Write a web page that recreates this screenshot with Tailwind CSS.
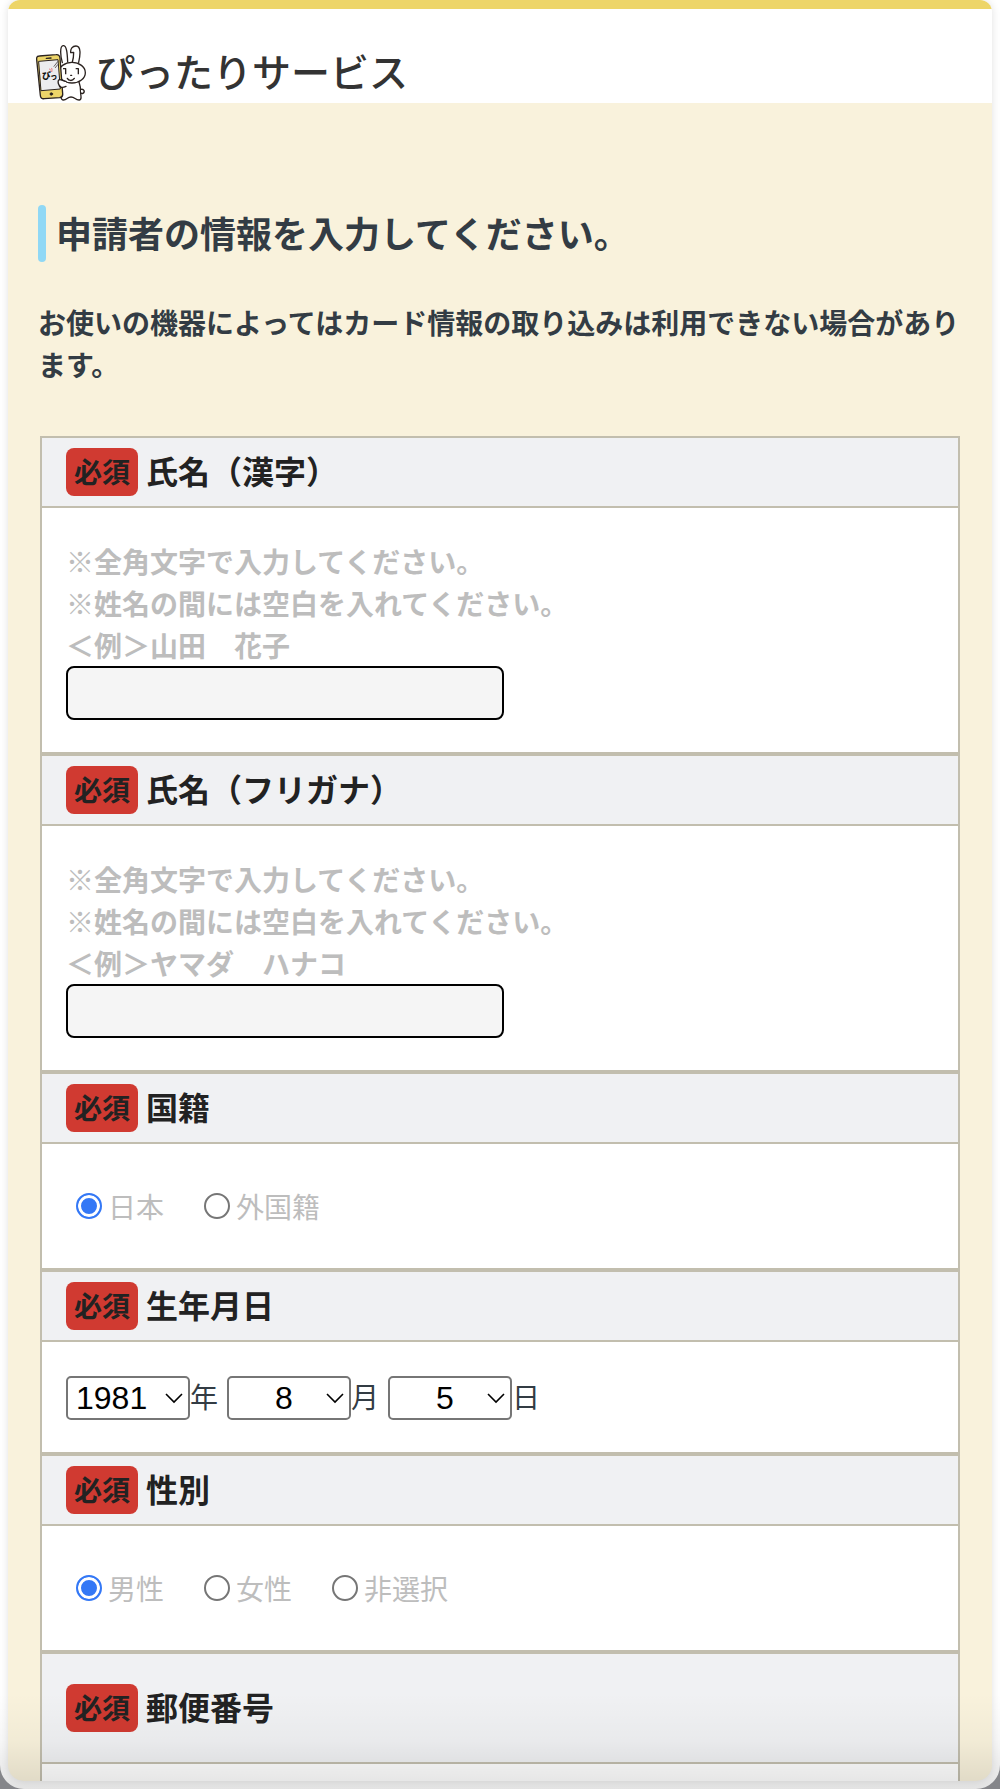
<!DOCTYPE html>
<html lang="ja">
<head>
<meta charset="utf-8">
<meta name="viewport" content="width=device-width, initial-scale=1">
<title>ぴったりサービス</title>
<script src="https://cdn.jsdelivr.net/npm/@tailwindcss/browser@4"></script>
</head>
<body class="bg-[#85868a] font-['Noto_Sans_CJK_JP',sans-serif] text-[#333c44]">
<div class="relative min-h-screen overflow-hidden rounded-b-[24px] bg-white px-2 pb-2">
  <div class="overflow-hidden rounded-t-[12px] rounded-b-[16px] bg-[#f9f2dc] shadow-[0_0_8px_rgba(0,0,0,0.12)]">

    <header class="border-t-[9px] border-[#edd569] bg-white">
      <a href="#" class="flex h-[94px] items-end gap-[10px] px-7 pb-[2px]">
        <svg class="h-14 w-[50px] shrink-0" viewBox="0 0 150 168" fill="none" stroke="#2b2320" stroke-width="4" stroke-linecap="round" stroke-linejoin="round" aria-hidden="true">
          <path d="M79 53C73 34 71 4 81 2c12-2 13 28 14 49M109 51c3-9 4-17 4-29l-9 1c-1-12 5-20 16-20 16 0 13 28 8 49" fill="#fff"/>
          <path d="M84 108c-3 12-8 24-8 38 0 8-4 17 5 19 12 1 12-9 24-9s13 10 25 9c9-2 4-12 4-21 0-12-1-23-5-33" fill="#fff"/>
          <path d="M135 133c9-2 13 8 6 12-3 1-5 0-6-1" fill="#fff"/>
          <ellipse cx="108" cy="83" rx="40" ry="31" fill="#fff"/>
          <path d="M10 33l50-4c8-1 11 3 12 10l8 107c1 8-2 11-9 12l-46 3c-8 1-12-3-12-10L2 44c-1-7 2-11 8-11z" fill="#edd569"/>
          <path d="M9 49l57-5 7 88-57 5z" fill="#ececee" stroke-width="3"/>
          <path d="M31 40l14-1"/>
          <circle cx="46" cy="147" r="4" fill="#2b2320" stroke-width="2"/>
          <path d="M54 64l11-14M58 68l7-9" stroke-width="2"/>
          <path d="M40 72l6 5M47 70l1 4M44 80l5-2" stroke="#e04a4a" stroke-width="2"/>
          <text x="18" y="102" font-size="26" font-weight="900" fill="#111" stroke="none">ぴ</text>
          <text x="43" y="101" font-size="21" font-weight="900" fill="#111" stroke="none">っ</text>
          <path d="M81 71h8v17M119 71h8v17" stroke-width="4" stroke-linecap="butt"/>
          <path d="M94 100c4 8 15 9 21 0M104 91h3"/>
          <path d="M90 109c-7 1-13-6-20-5-7 3-3 20 6 23 5 1 10-1 14-3" fill="#fff"/>
        </svg>
        <span class="pb-[3px] text-[39px] font-medium leading-[56px] text-[#333]">ぴったりサービス</span>
      </a>
    </header>

    <main class="px-[30px] pt-[102px]">
      <h1 class="flex items-center gap-[10px] text-4xl font-bold"><span class="h-[57px] w-2 shrink-0 rounded-full bg-[#90d8f5]"></span><span class="pb-1">申請者の情報を入力してください。</span></h1>
      <p class="mt-[39px] text-[28px] font-bold leading-[42px]">お使いの機器によってはカード情報の取り込みは利用できない場合があります。</p>

      <form class="mx-[2px] mt-[51px] border-2 border-b-0 border-[#c2beae] bg-white">
        <section>
          <h2 class="flex h-[70px] items-center gap-2 border-b-2 border-[#c2beae] bg-[#f0f1f3] px-6 text-[32px] font-bold text-[#222]"><span class="rounded-lg bg-[#d03a31] px-2 pb-[2px] text-[28px] leading-[46px]">必須</span><label for="kanji" class="pb-1">氏名（漢字）</label></h2>
          <div class="border-b-4 border-[#c2beae] px-6 py-8">
            <p class="text-[28px] font-bold leading-[42px] text-[#bdbdbd]">※全角文字で入力してください。<br>※姓名の間には空白を入れてください。<br>＜例＞山田　花子</p>
            <input id="kanji" type="text" class="block h-[54px] w-[438px] max-w-full rounded-lg border-2 border-black bg-[#f5f5f5] px-3 text-[28px]">
          </div>
        </section>

        <section>
          <h2 class="flex h-[70px] items-center gap-2 border-b-2 border-[#c2beae] bg-[#f0f1f3] px-6 text-[32px] font-bold text-[#222]"><span class="rounded-lg bg-[#d03a31] px-2 pb-[2px] text-[28px] leading-[46px]">必須</span><label for="kana" class="pb-1">氏名（フリガナ）</label></h2>
          <div class="border-b-4 border-[#c2beae] px-6 py-8">
            <p class="text-[28px] font-bold leading-[42px] text-[#bdbdbd]">※全角文字で入力してください。<br>※姓名の間には空白を入れてください。<br>＜例＞ヤマダ　ハナコ</p>
            <input id="kana" type="text" class="block h-[54px] w-[438px] max-w-full rounded-lg border-2 border-black bg-[#f5f5f5] px-3 text-[28px]">
          </div>
        </section>

        <section role="radiogroup" aria-labelledby="nationality">
          <h2 class="flex h-[70px] items-center gap-2 border-b-2 border-[#c2beae] bg-[#f0f1f3] px-6 text-[32px] font-bold text-[#222]"><span class="rounded-lg bg-[#d03a31] px-2 pb-[2px] text-[28px] leading-[46px]">必須</span><span id="nationality" class="pb-1">国籍</span></h2>
          <div class="flex h-32 items-center gap-10 border-b-4 border-[#c2beae] px-[34px] text-[28px] leading-[42px] text-[#bdbdbd]">
            <label class="flex items-center gap-[6px]"><input type="radio" name="nationality" checked class="size-[26px] appearance-none rounded-full border-2 border-[#767676] bg-white checked:border-[#3478f6] checked:bg-[#3478f6] checked:shadow-[inset_0_0_0_3px_#fff]">日本</label>
            <label class="flex items-center gap-[6px]"><input type="radio" name="nationality" class="size-[26px] appearance-none rounded-full border-2 border-[#767676] bg-white checked:border-[#3478f6] checked:bg-[#3478f6] checked:shadow-[inset_0_0_0_3px_#fff]">外国籍</label>
          </div>
        </section>

        <section>
          <h2 class="flex h-[70px] items-center gap-2 border-b-2 border-[#c2beae] bg-[#f0f1f3] px-6 text-[32px] font-bold text-[#222]"><span class="rounded-lg bg-[#d03a31] px-2 pb-[2px] text-[28px] leading-[46px]">必須</span><span class="pb-1">生年月日</span></h2>
          <div class="flex h-[114px] items-center gap-[9px] border-b-4 border-[#c2beae] px-6 pt-[2px] text-[28px] leading-[42px]">
            <label class="flex items-center"><span class="relative"><select class="block h-11 w-[124px] appearance-none rounded-[5px] border-2 border-[#767676] bg-white pl-2 font-['Liberation_Sans',sans-serif] text-[32px] leading-10 text-black"><option>1981</option></select><svg class="pointer-events-none absolute right-[7px] top-4 h-3 w-[18px]" viewBox="0 0 18 12" fill="none" stroke="#000" stroke-width="1.6" aria-hidden="true"><path d="M1 2l8 8 8-8"/></svg></span><span class="pb-[5px]">年</span></label>
            <label class="flex items-center"><span class="relative"><select class="block h-11 w-[124px] appearance-none rounded-[5px] border-2 border-[#767676] bg-white pl-[46px] font-['Liberation_Sans',sans-serif] text-[32px] leading-10 text-black"><option>8</option></select><svg class="pointer-events-none absolute right-[7px] top-4 h-3 w-[18px]" viewBox="0 0 18 12" fill="none" stroke="#000" stroke-width="1.6" aria-hidden="true"><path d="M1 2l8 8 8-8"/></svg></span><span class="pb-[5px]">月</span></label>
            <label class="flex items-center"><span class="relative"><select class="block h-11 w-[124px] appearance-none rounded-[5px] border-2 border-[#767676] bg-white pl-[46px] font-['Liberation_Sans',sans-serif] text-[32px] leading-10 text-black"><option>5</option></select><svg class="pointer-events-none absolute right-[7px] top-4 h-3 w-[18px]" viewBox="0 0 18 12" fill="none" stroke="#000" stroke-width="1.6" aria-hidden="true"><path d="M1 2l8 8 8-8"/></svg></span><span class="pb-[5px]">日</span></label>
          </div>
        </section>

        <section role="radiogroup" aria-labelledby="gender">
          <h2 class="flex h-[70px] items-center gap-2 border-b-2 border-[#c2beae] bg-[#f0f1f3] px-6 text-[32px] font-bold text-[#222]"><span class="rounded-lg bg-[#d03a31] px-2 pb-[2px] text-[28px] leading-[46px]">必須</span><span id="gender" class="pb-1">性別</span></h2>
          <div class="flex h-32 items-center gap-10 border-b-4 border-[#c2beae] px-[34px] text-[28px] leading-[42px] text-[#bdbdbd]">
            <label class="flex items-center gap-[6px]"><input type="radio" name="gender" checked class="size-[26px] appearance-none rounded-full border-2 border-[#767676] bg-white checked:border-[#3478f6] checked:bg-[#3478f6] checked:shadow-[inset_0_0_0_3px_#fff]">男性</label>
            <label class="flex items-center gap-[6px]"><input type="radio" name="gender" class="size-[26px] appearance-none rounded-full border-2 border-[#767676] bg-white checked:border-[#3478f6] checked:bg-[#3478f6] checked:shadow-[inset_0_0_0_3px_#fff]">女性</label>
            <label class="flex items-center gap-[6px]"><input type="radio" name="gender" class="size-[26px] appearance-none rounded-full border-2 border-[#767676] bg-white checked:border-[#3478f6] checked:bg-[#3478f6] checked:shadow-[inset_0_0_0_3px_#fff]">非選択</label>
          </div>
        </section>

        <section>
          <h2 class="flex h-[110px] items-center gap-2 border-b-2 border-[#c2beae] bg-[#f0f1f3] px-6 text-[32px] font-bold text-[#222]"><span class="rounded-lg bg-[#d03a31] px-2 pb-[2px] text-[28px] leading-[46px]">必須</span><span class="pb-1">郵便番号</span></h2>
          <div class="h-[17px]"></div>
        </section>
      </form>
    </main>
  </div>
  <div class="pointer-events-none absolute inset-x-0 bottom-0 h-24 bg-linear-to-b from-transparent via-black/3 to-black/11"></div>
</div>
</body>
</html>
